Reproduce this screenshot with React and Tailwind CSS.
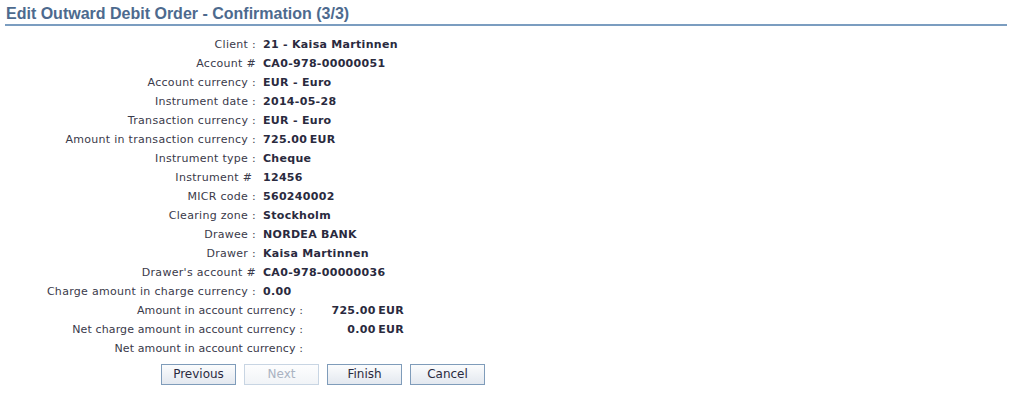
export default function App() {
  const rows = [
    ["Client :", "21 - Kaisa Martinnen"],
    ["Account #", "CA0-978-00000051"],
    ["Account currency :", "EUR - Euro"],
    ["Instrument date :", "2014-05-28"],
    ["Transaction currency :", "EUR - Euro"],
    ["Amount in transaction currency :", "725.00\u2009EUR"],
    ["Instrument type :", "Cheque"],
    ["Instrument # ", "12456"],
    ["MICR code :", "560240002"],
    ["Clearing zone :", "Stockholm"],
    ["Drawee :", "NORDEA BANK"],
    ["Drawer :", "Kaisa Martinnen"],
    ["Drawer's account #", "CA0-978-00000036"],
    ["Charge amount in charge currency :", "0.00"],
  ];
  const rows2 = [
    ["Amount in account currency :", "725.00\u2009EUR"],
    ["Net charge amount in account currency :", "0.00\u2009EUR"],
    ["Net amount in account currency :", ""],
  ];
  const font = { fontFamily: "'DejaVu Sans', Verdana, sans-serif" };
  return (
    <div className="w-[1012px] h-[395px] bg-white" style={font}>
      <div className="pl-[5px] pr-[5px] pt-[4px]">
        <div className="text-[16px] leading-[19px] font-bold text-[#4d6a8e] pl-px pb-[1px] border-b-2 border-[#7b9dc0] font-['Liberation_Sans',Arial,sans-serif]">
          Edit Outward Debit Order - Confirmation (3/3)
        </div>
      </div>
      <div className="pt-[9px] text-[11px] leading-[19px] tracking-[0.3px]">
        <div className="grid grid-cols-[256px_auto] gap-x-[7px]">
          {rows.map(([l, v], i) => (
            <div key={i} className="contents">
              <div className="text-right text-[#3a3a4a] whitespace-pre">{l}</div>
              <div className="font-bold text-[#2a2a3e]">{v}</div>
            </div>
          ))}
        </div>
        <div className="grid grid-cols-[303px_101px]">
          {rows2.map(([l, v], i) => (
            <div key={i} className="contents">
              <div className="text-right text-[#3a3a4a] tracking-[0.12px]">{l}</div>
              <div className="text-right font-bold text-[#2a2a3e]">{v}</div>
            </div>
          ))}
        </div>
        <div className="flex gap-[8px] pl-[161px] pt-[6px] tracking-normal">
          {["Previous", "Next", "Finish", "Cancel"].map((b) => (
            <button
              key={b}
              className={
                "w-[75px] h-[21px] text-[12px] leading-[19px] border bg-gradient-to-b " +
                (b === "Next"
                  ? "border-[#c8d5e3] text-[#aab3c2] from-[#fdfdfe] to-[#f1f4f7]"
                  : "border-[#7f9cba] text-[#2a2a3e] from-[#fbfcfd] to-[#e3e8ef]")
              }
            >
              {b}
            </button>
          ))}
        </div>
      </div>
    </div>
  );
}
